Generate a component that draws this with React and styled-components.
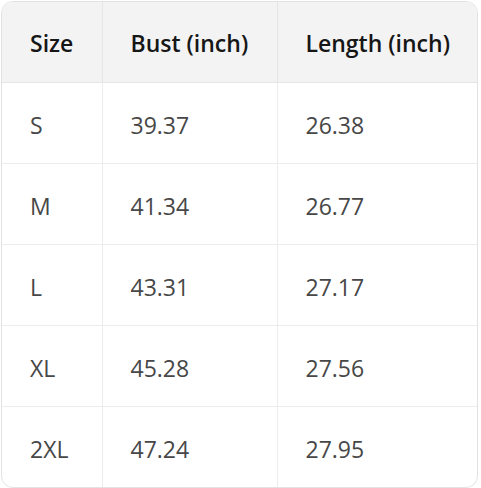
import styled, { createGlobalStyle } from 'styled-components';

const GlobalStyle = createGlobalStyle`
  html, body {
    margin: 0;
    padding: 0;
    background: #ffffff;
  }
`;

const rows = [
  ['S', '39.37', '26.38'],
  ['M', '41.34', '26.77'],
  ['L', '43.31', '27.17'],
  ['XL', '45.28', '27.56'],
  ['2XL', '47.24', '27.95'],
];

const Wrapper = styled.div`
  padding: 1px 3px 3px 1px;
`;

const Frame = styled.div`
  border: 1px solid #e3e3e3;
  border-radius: 12px;
  overflow: hidden;
`;

const Table = styled.table`
  width: 100%;
  border-collapse: collapse;
  table-layout: fixed;
  font-family: 'Open Sans', 'Noto Sans', sans-serif;
  font-size: 23px;
`;

const HeadCell = styled.th`
  height: 78px;
  padding: 2px 0 0 28px;
  background: #f3f3f3;
  color: #161616;
  font-weight: 600;
  text-align: left;
  border-left: 1px solid #e6e6e6;
  border-bottom: 1px solid #e6e6e6;

  &:first-child {
    border-left: none;
  }
`;

const Cell = styled.td`
  height: 77px;
  padding: 3px 0 0 28px;
  color: #474747;
  font-weight: 400;
  border-left: 1px solid #ececec;
  border-top: 1px solid #ececec;

  &:first-child {
    border-left: none;
  }
`;

const Row = styled.tr``;

export default function App() {
  return (
    <Wrapper>
      <GlobalStyle />
      <Frame>
        <Table>
          <colgroup>
            <col style={{ width: 100 }} />
            <col style={{ width: 175 }} />
            <col />
          </colgroup>
          <thead>
            <tr>
              <HeadCell>Size</HeadCell>
              <HeadCell>Bust (inch)</HeadCell>
              <HeadCell>Length (inch)</HeadCell>
            </tr>
          </thead>
          <tbody>
            {rows.map(([size, bust, length]) => (
              <Row key={size}>
                <Cell>{size}</Cell>
                <Cell>{bust}</Cell>
                <Cell>{length}</Cell>
              </Row>
            ))}
          </tbody>
        </Table>
      </Frame>
    </Wrapper>
  );
}
